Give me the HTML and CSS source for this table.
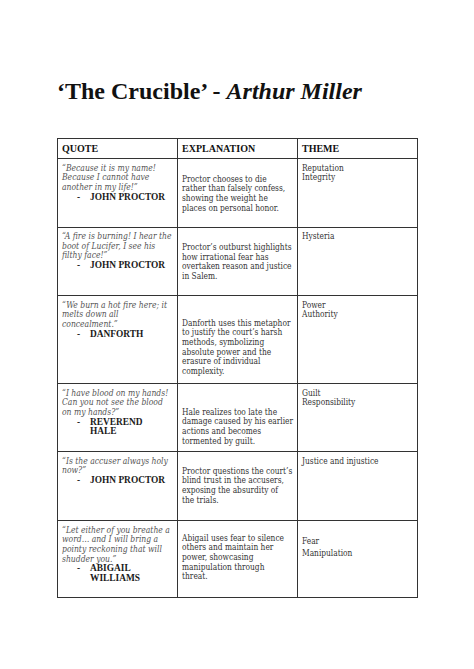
FILE: index.html
```html
<!DOCTYPE html>
<html lang="en">
<head>
<meta charset="utf-8">
<title>The Crucible - Arthur Miller</title>
<link rel="stylesheet" href="styles.css">
</head>
<body>
<main class="page">
  <h1 class="title">‘The Crucible’ - <em>Arthur Miller</em></h1>
  <table class="quotes">
    <colgroup>
      <col class="col">
      <col class="col">
      <col class="col">
    </colgroup>
    <thead>
      <tr class="head">
        <th>QUOTE</th>
        <th>EXPLANATION</th>
        <th>THEME</th>
      </tr>
    </thead>
    <tbody>
      <tr class="r1">
        <td class="quote">
          <p>“Because it is my name!<br>Because I cannot have<br>another in my life!”</p>
          <ul class="who"><li>JOHN PROCTOR</li></ul>
        </td>
        <td class="expl">Proctor chooses to die<br>rather than falsely confess,<br>showing the weight he<br>places on personal honor.</td>
        <td class="theme">Reputation<br>Integrity</td>
      </tr>
      <tr class="r2">
        <td class="quote">
          <p>“A fire is burning! I hear the<br>boot of Lucifer, I see his<br>filthy face!”</p>
          <ul class="who"><li>JOHN PROCTOR</li></ul>
        </td>
        <td class="expl">Proctor’s outburst highlights<br>how irrational fear has<br>overtaken reason and justice<br>in Salem.</td>
        <td class="theme">Hysteria</td>
      </tr>
      <tr class="r3">
        <td class="quote">
          <p>“We burn a hot fire here; it<br>melts down all<br>concealment.”</p>
          <ul class="who"><li>DANFORTH</li></ul>
        </td>
        <td class="expl">Danforth uses this metaphor<br>to justify the court’s harsh<br>methods, symbolizing<br>absolute power and the<br>erasure of individual<br>complexity.</td>
        <td class="theme">Power<br>Authority</td>
      </tr>
      <tr class="r4">
        <td class="quote">
          <p>“I have blood on my hands!<br>Can you not see the blood<br>on my hands?”</p>
          <ul class="who"><li>REVEREND<br>HALE</li></ul>
        </td>
        <td class="expl">Hale realizes too late the<br>damage caused by his earlier<br>actions and becomes<br>tormented by guilt.</td>
        <td class="theme">Guilt<br>Responsibility</td>
      </tr>
      <tr class="r5">
        <td class="quote">
          <p>“Is the accuser always holy<br>now?”</p>
          <ul class="who"><li>JOHN PROCTOR</li></ul>
        </td>
        <td class="expl">Proctor questions the court’s<br>blind trust in the accusers,<br>exposing the absurdity of<br>the trials.</td>
        <td class="theme">Justice and injustice</td>
      </tr>
      <tr class="r6">
        <td class="quote">
          <p>“Let either of you breathe a<br>word… and I will bring a<br>pointy reckoning that will<br>shudder you.”</p>
          <ul class="who"><li>ABIGAIL<br>WILLIAMS</li></ul>
        </td>
        <td class="expl">Abigail uses fear to silence<br>others and maintain her<br>power, showcasing<br>manipulation through<br>threat.</td>
        <td class="theme theme-spaced">Fear<br>Manipulation</td>
      </tr>
    </tbody>
  </table>
</main>
</body>
</html>
```

FILE: styles.css
```css
html, body {
  margin: 0;
  padding: 0;
  background: #ffffff;
}

body {
  font-family: "Liberation Serif", "Times New Roman", serif;
  color: #222;
}

.page {
  padding: 77px 0 0 57px;
  width: 360px;
}

.title {
  margin: 0 0 33px 0;
  font-size: 24px;
  line-height: 28px;
  font-weight: bold;
  color: #111;
  white-space: nowrap;
}

.title em {
  font-style: italic;
}

.quotes {
  border-collapse: collapse;
  width: 360px;
  table-layout: fixed;
}

.col {
  width: 120px;
}

.quotes th,
.quotes td {
  border: 1.5px solid #333;
  vertical-align: top;
  text-align: left;
  padding: 4.5px 1px 2px 4px;
  white-space: nowrap;
}

.quotes th {
  font-size: 10px;
  font-weight: bold;
  color: #111;
  line-height: 12px;
  padding-top: 4px;
}

.head { height: 20px; }
.r1 { height: 68.5px; }
.r2 { height: 68.5px; }
.r3 { height: 88px; }
.r4 { height: 68px; }
.r5 { height: 69px; }
.r6 { height: 77px; }

.quote p {
  margin: 0;
  font-family: "DejaVu Serif Condensed", "DejaVu Serif", serif;
  font-style: italic;
  font-size: 8.5px;
  line-height: 9.7px;
  color: #555;
}

.who {
  margin: 0;
  padding: 0 0 0 28px;
  list-style: none;
  font-size: 9.4px;
  line-height: 9.8px;
  font-weight: bold;
  color: #1a1a1a;
}

.who li {
  position: relative;
}

.who li::before {
  content: "-";
  position: absolute;
  left: -13px;
  top: 0;
}

.expl {
  font-family: "DejaVu Serif Condensed", "DejaVu Serif", serif;
  font-size: 8.3px;
  line-height: 9.7px;
  color: #333;
}

.quotes td.expl { padding-top: 15.5px; }
.quotes .r3 td.expl { padding-top: 22.5px; }
.quotes .r4 td.expl { padding-top: 23.5px; }
.quotes .r5 td.expl { padding-top: 14.5px; }
.quotes .r6 td.expl { padding-top: 12.5px; }

.theme {
  font-family: "DejaVu Serif Condensed", "DejaVu Serif", serif;
  font-size: 8.3px;
  line-height: 9.8px;
  color: #333;
}

.quotes td.theme-spaced {
  padding-top: 14px;
  line-height: 12px;
}
```
